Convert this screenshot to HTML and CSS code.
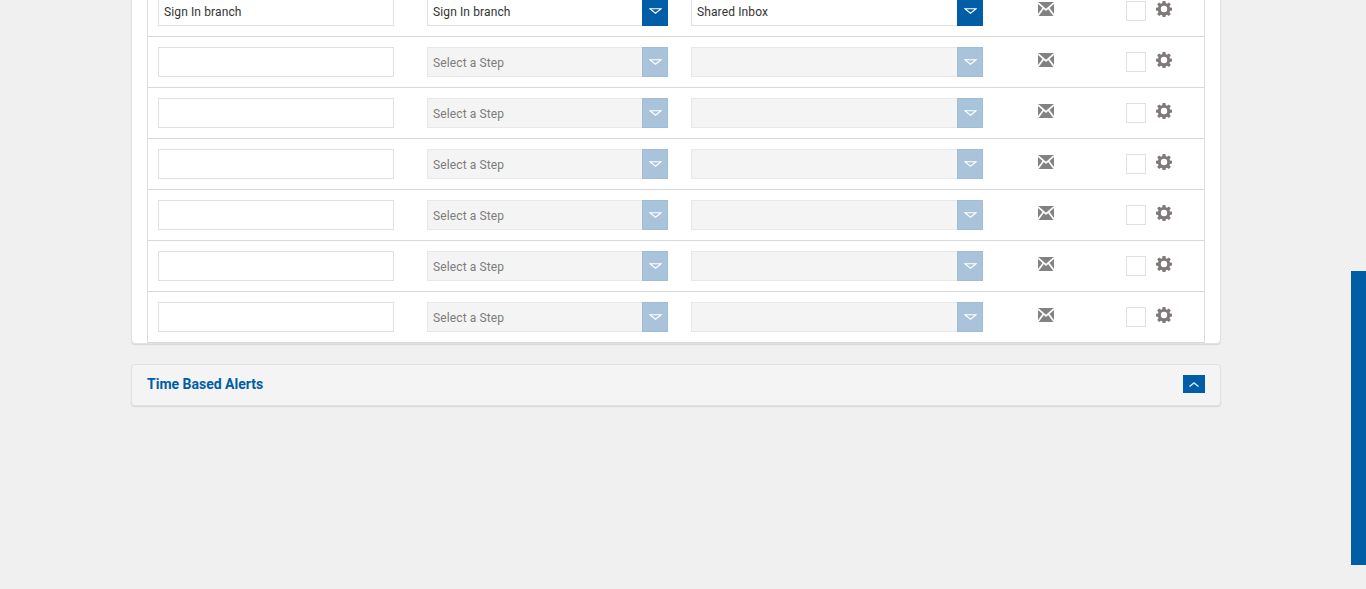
FILE: index.html
```html
<!DOCTYPE html>
<html lang="en">
<head>
<meta charset="utf-8">
<title>Alerts</title>
<link rel="stylesheet" href="styles.css">
</head>
<body>
<svg width="0" height="0" class="defs">
  <symbol id="mail" viewBox="0 0 16 14">
    <path fill="#828282" d="M0 0h16v14H0z"/>
    <path fill="none" stroke="#fff" stroke-width="1.700" d="M0 .8 8 7.800 16 .8M0 13.500 5.500 6M16 13.500 10.500 6"/>
  </symbol>
  <symbol id="gear" viewBox="0 0 16 16">
    <path fill="#80797a" fill-rule="evenodd" d="M6.600 0h2.800l.4 2.200 1.200.5L12.900 1.400l1.900 1.900-1.300 1.900.5 1.200 2 .4v2.800l-2 .4-.5 1.200 1.300 1.900-1.900 1.900-1.900-1.300-1.200.5-.4 2H6.600l-.4-2-1.200-.5-1.900 1.300-1.900-1.900 1.300-1.900-.5-1.200-2-.4V6.800l2-.4.5-1.200-1.300-1.900L3.100 1.400 5 2.700l1.200-.5zM8 4.800a3.200 3.200 0 1 0 0 6.400 3.200 3.200 0 0 0 0-6.400z"/>
  </symbol>
  <symbol id="caret" viewBox="0 0 13 6">
    <path fill="none" stroke="#fff" stroke-width="1.100" d="M1 .8h11L6.500 5.200z"/>
  </symbol>
  <symbol id="chev" viewBox="0 0 10 5">
    <path fill="none" stroke="#d6e8f7" stroke-width="1.400" d="M.5 4.500 5 1l4.500 3.500"/>
  </symbol>
</svg>

<main class="page">
  <section class="card">
    <div class="table">
      <div class="row">
        <div class="field">Sign In branch</div>
        <div class="select"><span class="select-text">Sign In branch</span><span class="select-btn"><svg class="caret"><use href="#caret"/></svg></span></div>
        <div class="select wide"><span class="select-text">Shared Inbox</span><span class="select-btn"><svg class="caret"><use href="#caret"/></svg></span></div>
        <svg class="mail"><use href="#mail"/></svg>
        <span class="check"></span>
        <svg class="gear"><use href="#gear"/></svg>
      </div>
      <div class="row">
        <div class="field"></div>
        <div class="select off"><span class="select-text">Select a Step</span><span class="select-btn"><svg class="caret"><use href="#caret"/></svg></span></div>
        <div class="select wide off"><span class="select-text"></span><span class="select-btn"><svg class="caret"><use href="#caret"/></svg></span></div>
        <svg class="mail"><use href="#mail"/></svg>
        <span class="check"></span>
        <svg class="gear"><use href="#gear"/></svg>
      </div>
      <div class="row">
        <div class="field"></div>
        <div class="select off"><span class="select-text">Select a Step</span><span class="select-btn"><svg class="caret"><use href="#caret"/></svg></span></div>
        <div class="select wide off"><span class="select-text"></span><span class="select-btn"><svg class="caret"><use href="#caret"/></svg></span></div>
        <svg class="mail"><use href="#mail"/></svg>
        <span class="check"></span>
        <svg class="gear"><use href="#gear"/></svg>
      </div>
      <div class="row">
        <div class="field"></div>
        <div class="select off"><span class="select-text">Select a Step</span><span class="select-btn"><svg class="caret"><use href="#caret"/></svg></span></div>
        <div class="select wide off"><span class="select-text"></span><span class="select-btn"><svg class="caret"><use href="#caret"/></svg></span></div>
        <svg class="mail"><use href="#mail"/></svg>
        <span class="check"></span>
        <svg class="gear"><use href="#gear"/></svg>
      </div>
      <div class="row">
        <div class="field"></div>
        <div class="select off"><span class="select-text">Select a Step</span><span class="select-btn"><svg class="caret"><use href="#caret"/></svg></span></div>
        <div class="select wide off"><span class="select-text"></span><span class="select-btn"><svg class="caret"><use href="#caret"/></svg></span></div>
        <svg class="mail"><use href="#mail"/></svg>
        <span class="check"></span>
        <svg class="gear"><use href="#gear"/></svg>
      </div>
      <div class="row">
        <div class="field"></div>
        <div class="select off"><span class="select-text">Select a Step</span><span class="select-btn"><svg class="caret"><use href="#caret"/></svg></span></div>
        <div class="select wide off"><span class="select-text"></span><span class="select-btn"><svg class="caret"><use href="#caret"/></svg></span></div>
        <svg class="mail"><use href="#mail"/></svg>
        <span class="check"></span>
        <svg class="gear"><use href="#gear"/></svg>
      </div>
      <div class="row">
        <div class="field"></div>
        <div class="select off"><span class="select-text">Select a Step</span><span class="select-btn"><svg class="caret"><use href="#caret"/></svg></span></div>
        <div class="select wide off"><span class="select-text"></span><span class="select-btn"><svg class="caret"><use href="#caret"/></svg></span></div>
        <svg class="mail"><use href="#mail"/></svg>
        <span class="check"></span>
        <svg class="gear"><use href="#gear"/></svg>
      </div>
    </div>
  </section>

  <section class="panel">
    <h2 class="panel-title">Time Based Alerts</h2>
    <span class="panel-btn"><svg class="chev"><use href="#chev"/></svg></span>
  </section>
</main>

<div class="scroll-thumb"></div>
</body>
</html>
```
FILE: styles.css
```css
* { box-sizing: border-box; }

html, body {
  height: 100%;
  margin: 0;
  overflow: hidden;
  background: #f0f0f0;
}

body {
  font-family: Roboto, "Liberation Sans", sans-serif;
  font-size: 12px;
  letter-spacing: .12px;
  color: #333;
}

.defs { position: absolute; }

.page {
  width: 1090px;
  margin: -15px 0 0 131px;
  display: flex;
  flex-direction: column;
  gap: 20px;
}

.card {
  background: #fff;
  border: 1px solid #e2e2e2;
  border-radius: 4px;
  box-shadow: 0 1px 1px #d8d8d8;
  padding: 0 15px;
}

.table {
  border-left: 1px solid #ddd;
  border-right: 1px solid #ddd;
}

.row {
  height: 51px;
  padding: 10px 0 10px 10px;
  border-bottom: 1px solid #d9d9d9;
  display: flex;
  align-items: flex-start;
}

.field {
  width: 236px;
  height: 30px;
  margin-right: 33px;
  padding-left: 5px;
  background: #fff;
  border: 1px solid #e0e0e0;
  line-height: 31px;
}

.select {
  width: 241px;
  height: 30px;
  margin-right: 23px;
  display: flex;
  background: #fff;
  border: 1px solid #e0e0e0;
  border-right: 0;
}

.select.wide {
  width: 292px;
  margin-right: 55px;
}

.select-text {
  flex: 1;
  padding-left: 5px;
  line-height: 31px;
}

.select-btn {
  width: 26px;
  height: 30px;
  margin-top: -1px;
  background: #005da6;
  display: flex;
  align-items: center;
  justify-content: center;
}

.select.off {
  background: #f4f4f4;
  border-color: #e8e8e8;
  color: #7c7c7c;
}

.select.off .select-btn {
  background: #a9c4da;
  border: 1px solid #a0bdd6;
}

.caret {
  width: 13px;
  height: 6px;
}

.mail {
  width: 16px;
  height: 14px;
  margin: 6px 72px 0 0;
}

.check {
  width: 20px;
  height: 20px;
  margin: 5px 10px 0 0;
  background: #fff;
  border: 1px solid #e0e0e0;
}

.gear {
  width: 16px;
  height: 16px;
  margin-top: 5px;
}

.panel {
  height: 42px;
  padding: 0 15px 2px;
  background: #f4f4f4;
  border: 1px solid #e2e2e2;
  border-radius: 4px;
  box-shadow: 0 1px 1px #d8d8d8;
  display: flex;
  align-items: center;
  justify-content: space-between;
}

.panel-title {
  margin: 0;
  font-size: 14px;
  font-weight: 700;
  letter-spacing: 0;
  color: #005da6;
}

.panel-btn {
  width: 22px;
  height: 18px;
  background: #005da6;
  display: flex;
  align-items: center;
  justify-content: center;
}

.chev {
  width: 10px;
  height: 5px;
}

.scroll-thumb {
  position: fixed;
  right: 0;
  top: 271px;
  width: 15px;
  height: 294px;
  background: #005da6;
}
```
